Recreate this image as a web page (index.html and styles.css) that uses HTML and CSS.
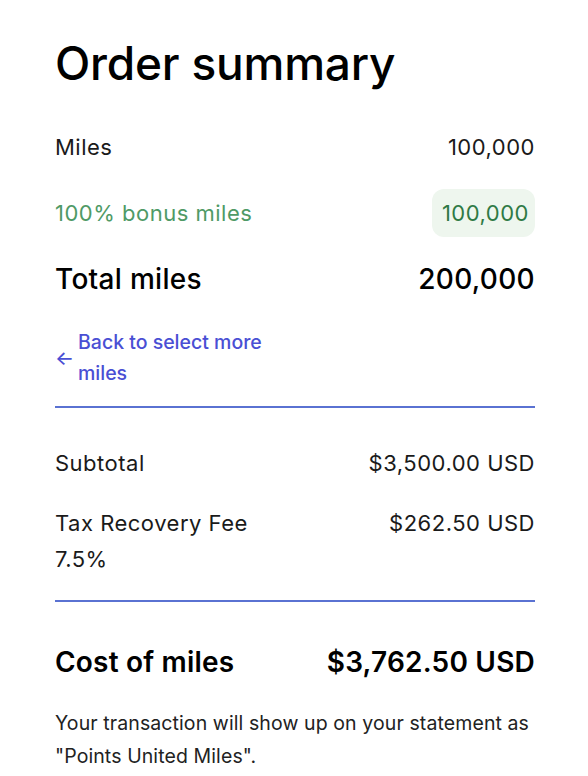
FILE: index.html
```html
<!DOCTYPE html>
<html>
<head>
    <link rel="stylesheet" href="styles.css">
</head>
<body>
    <div class="summary">
        <h1>Order summary</h1>

        <div class="miles-list">
            <div class="row">
                <span>Miles</span>
                <span>100,000</span>
            </div>
            <div class="row bonus">
                <span>100% bonus miles</span>
                <span class="bonus-pill">100,000</span>
            </div>
            <div class="row total">
                <span>Total miles</span>
                <span>200,000</span>
            </div>
        </div>

        <a href="#" class="back-link">
            <span class="arrow">&larr;</span>
            <span class="back-text">Back to select more miles</span>
        </a>

        <div class="costs">
            <div class="cost-row">
                <span>Subtotal</span>
                <span>$3,500.00 USD</span>
            </div>
            <div class="cost-row">
                <span>Tax Recovery Fee<br>7.5%</span>
                <span>$262.50 USD</span>
            </div>
        </div>

        <div class="cost-total">
            <span>Cost of miles</span>
            <span>$3,762.50 USD</span>
        </div>

        <p class="note">Your transaction will show up on your statement as "Points United Miles".</p>
    </div>
</body>
</html>
```

FILE: styles.css
```css
body {
    margin: 0;
    background: #fff;
    color: #1a1a1a;
    font-family: Inter, "Liberation Sans", sans-serif;
}

.summary {
    padding: 37px 53px 0 55px;
}

h1 {
    margin: 0;
    font-size: 46px;
    line-height: 52px;
    font-weight: 500;
    letter-spacing: -0.2px;
    color: #000;
}

.miles-list {
    margin-top: 34px;
    display: flex;
    flex-direction: column;
    gap: 18px;
}

.row {
    height: 48px;
    display: flex;
    justify-content: space-between;
    align-items: center;
    font-size: 22px;
    letter-spacing: 0.5px;
}

.bonus {
    color: #4f9a66;
}

.bonus-pill {
    background-color: #eef6ee;
    color: #2f7a45;
    padding: 0 6px 0 10px;
    height: 48px;
    line-height: 48px;
    border-radius: 12px;
}

.total {
    font-size: 28px;
    font-weight: 500;
    letter-spacing: 0.3px;
    color: #000;
}

.back-link {
    margin-top: 24px;
    display: flex;
    align-items: center;
    gap: 4px;
    padding-bottom: 17px;
    border-bottom: 2px solid #5a72d2;
    color: #4a4fd4;
    text-decoration: none;
    font-size: 19.5px;
    line-height: 31px;
    font-weight: 500;
}

.arrow {
    width: 19px;
    font-size: 20px;
}

.back-text {
    width: 210px;
}

.costs {
    padding: 37px 0 23px;
    border-bottom: 2px solid #5a72d2;
    display: flex;
    flex-direction: column;
    gap: 24px;
}

.cost-row {
    display: flex;
    justify-content: space-between;
    align-items: flex-start;
    font-size: 22px;
    letter-spacing: 0.5px;
    line-height: 36px;
}

.cost-total {
    margin-top: 42px;
    display: flex;
    justify-content: space-between;
    font-size: 28px;
    line-height: 36px;
    font-weight: 600;
    letter-spacing: 0.2px;
    color: #000;
}

.note {
    margin: 27px 0 0;
    font-size: 19.5px;
    letter-spacing: 0.1px;
    line-height: 33px;
    color: #222;
}
```
